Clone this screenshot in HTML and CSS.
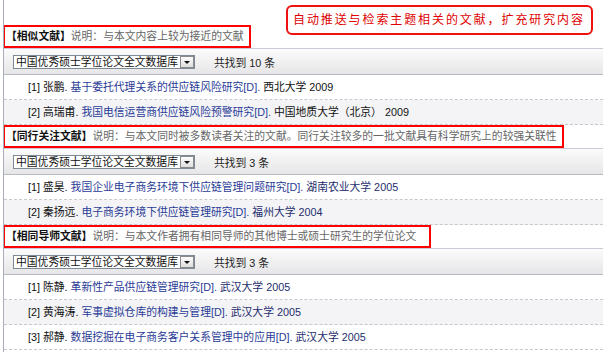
FILE: index.html
```html
<!DOCTYPE html>
<html>
<head>
  <meta charset="utf-8">
  <title>相关文献推荐</title>
  <link rel="stylesheet" href="styles.css">
</head>
<body>
  <div class="page">
    <div class="note">自动推送与检索主题相关的文献，扩充研究内容</div>

    <div class="section">
      <div class="title"><b>【相似文献】</b>说明：与本文内容上较为接近的文献</div>
      <div class="bar">
        <div class="select"><span class="select-text">中国优秀硕士学位论文全文数据库</span><span class="arrow"></span></div>
        <span class="count">共找到 10 条</span>
      </div>
      <ul class="list">
        <li>[1] 张鹏. <a href="#">基于委托代理关系的供应链风险研究[D].</a> 西北大学 2009</li>
        <li class="even">[2] 高瑞甫. <a href="#">我国电信运营商供应链风险预警研究[D].</a> 中国地质大学（北京） 2009</li>
      </ul>
    </div>

    <div class="section">
      <div class="title"><b>【同行关注文献】</b>说明：与本文同时被多数读者关注的文献。同行关注较多的一批文献具有科学研究上的较强关联性</div>
      <div class="bar">
        <div class="select"><span class="select-text">中国优秀硕士学位论文全文数据库</span><span class="arrow"></span></div>
        <span class="count">共找到 3 条</span>
      </div>
      <ul class="list">
        <li>[1] 盛昊. <a href="#">我国企业电子商务环境下供应链管理问题研究[D].</a> <span class="school">湖南农业大学 2005</span></li>
        <li class="even">[2] 秦扬远. <a href="#">电子商务环境下供应链管理研究[D].</a> <span class="school">福州大学 2004</span></li>
      </ul>
    </div>

    <div class="section">
      <div class="title title-wide"><b>【相同导师文献】</b>说明：与本文作者拥有相同导师的其他博士或硕士研究生的学位论文</div>
      <div class="bar">
        <div class="select"><span class="select-text">中国优秀硕士学位论文全文数据库</span><span class="arrow"></span></div>
        <span class="count">共找到 3 条</span>
      </div>
      <ul class="list">
        <li>[1] 陈静. <a href="#">革新性产品供应链管理研究[D].</a> <span class="school">武汉大学 2005</span></li>
        <li class="even">[2] 黄海涛. <a href="#">军事虚拟仓库的构建与管理[D].</a> <span class="school">武汉大学 2005</span></li>
        <li>[3] 郝静. <a href="#">数据挖掘在电子商务客户关系管理中的应用[D].</a> <span class="school">武汉大学 2005</span></li>
      </ul>
    </div>
  </div>
</body>
</html>
```

FILE: styles.css
```css
body {
  margin: 0;
  background: #fff;
  font-family: "Liberation Sans", "Noto Sans CJK SC", sans-serif;
  font-size: 10.8px;
  color: #111;
}

.page {
  position: relative;
  margin-left: 3px;
  padding-top: 25px;
  height: 327px;
  border-left: 1px solid #a9b0bb;
  overflow: hidden;
}

.note {
  position: absolute;
  left: 282px;
  top: 5px;
  width: 298px;
  height: 26px;
  padding-left: 5px;
  border: 2px solid #f01010;
  border-radius: 6px;
  color: #e00000;
  font-size: 12px;
  letter-spacing: 1.9px;
  line-height: 26px;
  background: #fff;
}

.title {
  display: inline-block;
  margin-left: -1px;
  height: 23px;
  box-sizing: border-box;
  padding: 0 5px 0 1px;
  border: 2px solid #f00;
  line-height: 19px;
  color: #666;
  white-space: nowrap;
  vertical-align: top;
}

.title b {
  color: #111;
}

.title-wide {
  padding-right: 13px;
}

.bar {
  display: flex;
  align-items: center;
  height: 27px;
  box-sizing: border-box;
  padding-left: 9px;
  border-top: 1px solid #cfc8d8;
  border-bottom: 1px solid #b9b9c0;
  background: linear-gradient(#fbfbfb, #e6e6e8);
}

.select {
  display: flex;
  align-items: center;
  height: 14px;
  box-sizing: border-box;
  padding-left: 2px;
  border: 1px solid #7f8a99;
  background: #fff;
  line-height: 12px;
}

.select-text {
  color: #111;
}

.arrow {
  position: relative;
  width: 14px;
  height: 12px;
  margin-left: 2px;
  box-sizing: border-box;
  border: 1px solid #8a8a8a;
  background: linear-gradient(#fdfdfd, #dedede);
}

.arrow::after {
  content: "";
  position: absolute;
  left: 3px;
  top: 4px;
  border-left: 3px solid transparent;
  border-right: 3px solid transparent;
  border-top: 3px solid #111;
}

.count {
  margin-left: 19px;
  color: #222;
}

.list {
  list-style: none;
  margin: 0;
  padding: 0;
}

.list li {
  height: 25px;
  box-sizing: border-box;
  padding-left: 24px;
  border-bottom: 1px dashed #c8c8cc;
  line-height: 24px;
  white-space: nowrap;
  color: #111;
}

.list li.even {
  background: #f4f4f6;
}

.list a {
  color: #2a3c96;
  text-decoration: none;
}

.school {
  color: #1e2d6e;
}
```
